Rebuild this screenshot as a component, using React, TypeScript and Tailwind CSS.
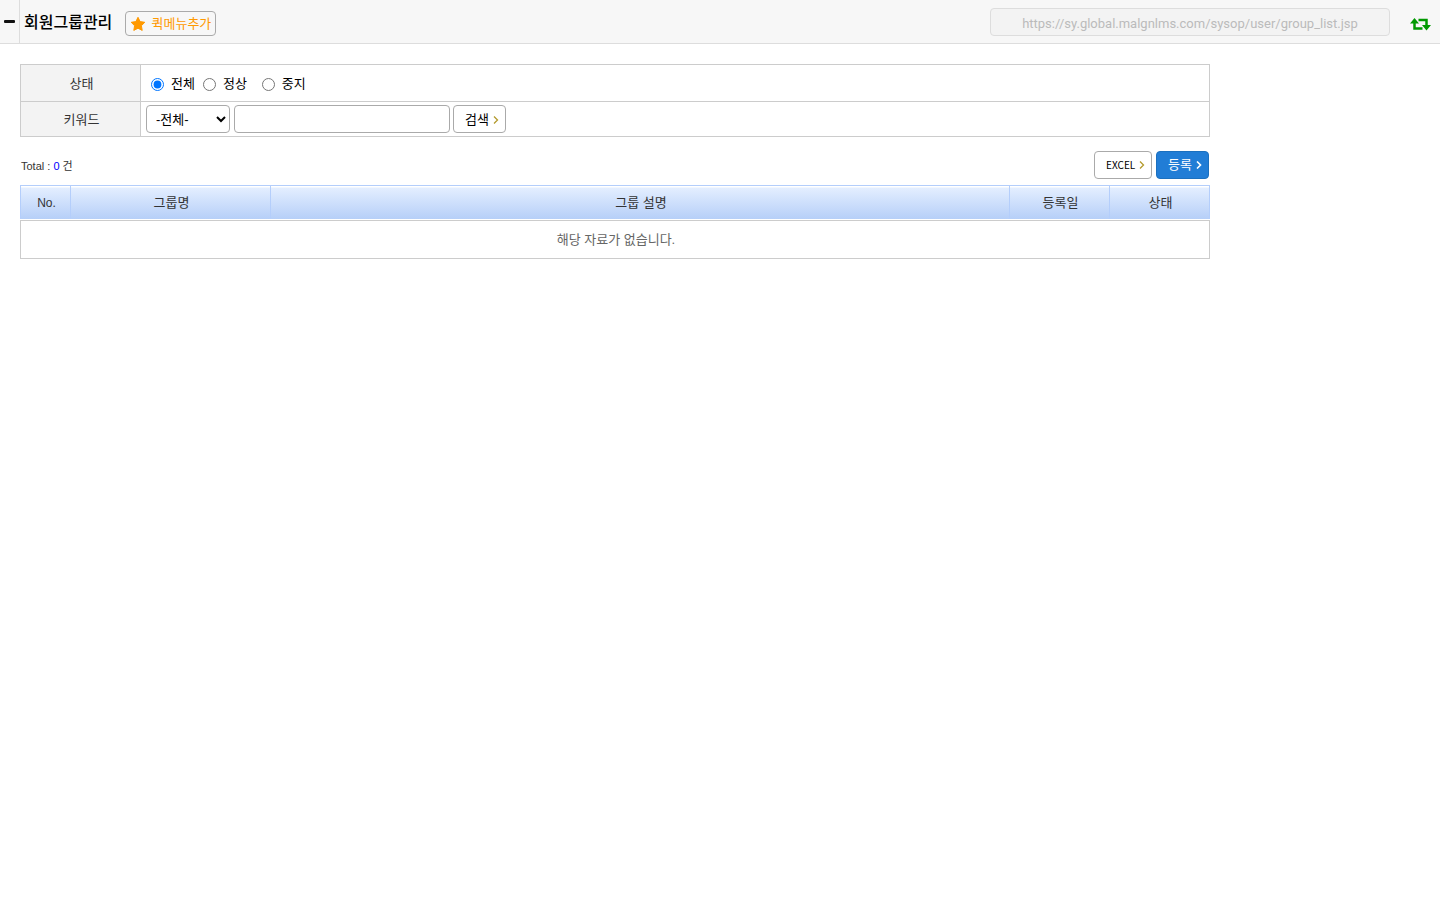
import type { ReactNode } from "react";

const statusOptions = [
  { value: "", label: "전체", spacing: "mr-2" },
  { value: "1", label: "정상", spacing: "mr-[15px]" },
  { value: "0", label: "중지", spacing: "" }
];

const columns = [
  { label: "No.", width: "w-[50px]", text: "text-xs" },
  { label: "그룹명", width: "w-[200px]", text: "" },
  { label: "그룹 설명", width: "", text: "" },
  { label: "등록일", width: "w-[100px]", text: "" },
  { label: "상태", width: "w-[101px]", text: "" }
];

function Chevron({ className }: { className: string }) {
  return (
    <svg viewBox="0 0 6 8" className={`h-2 w-1.5 shrink-0 fill-none ${className}`} aria-hidden="true">
      <path d="M1 0.5 4.5 4 1 7.5" />
    </svg>
  );
}

function SearchRow({ label, children }: { label: ReactNode; children: ReactNode }) {
  return (
    <tr>
      <th scope="row" className="w-[120px] border border-[#cccccc] bg-[#f3f3f3] pt-0.5 pl-0.5 font-normal text-[#333333]">
        {label}
      </th>
      <td className="border border-[#cccccc] px-[5px]">{children}</td>
    </tr>
  );
}

function TopBar() {
  return (
    <header className="flex h-11 items-stretch border-b border-[#dddddd] bg-[#f7f7f7]">
      <button type="button" aria-label="메뉴 접기" className="flex w-5 items-center border-r border-[#dddddd] pl-1">
        <svg viewBox="0 0 12 4" className="h-1 w-3" aria-hidden="true">
          <rect x="0" y="0" width="11" height="3" rx="1" fill="#111111" />
        </svg>
      </button>
      <h1 className="flex items-center pt-0.5 pl-1 text-base font-medium">회원그룹관리</h1>
      <button
        type="button"
        className="mt-[11px] ml-[13px] flex h-[25px] w-[91px] items-center justify-between rounded border border-[#aaaaaa] px-1 text-[#ff9900]"
      >
        <svg viewBox="0 0 16 16" className="size-4" aria-hidden="true">
          <path
            d="M8 1.3 10.1 5.6 14.8 6.3 11.4 9.7 12.2 14.4 8 12.2 3.8 14.4 4.6 9.7 1.2 6.3 5.9 5.6Z"
            fill="#ff9900"
            stroke="#ff9900"
            strokeLinejoin="round"
          />
        </svg>
        퀵메뉴추가
      </button>
      <input
        readOnly
        aria-label="페이지 주소"
        value="https://sy.global.malgnlms.com/sysop/user/group_list.jsp"
        className="mt-2 ml-auto h-7 w-[400px] rounded border border-[#dddddd] bg-[#f3f3f3] pt-0.5 text-center font-[Roboto,'Noto_Sans_CJK_KR',sans-serif] text-[13px] text-[#bbbbbb]"
      />
      <button type="button" aria-label="새로고침" className="mt-1 mr-[9px] ml-5 flex items-center">
        <svg viewBox="0 0 21 14" className="h-3.5 w-[21px]" aria-hidden="true">
          <path d="M4.5 4V11.5H12.5M8.5 3H16.5V10" fill="none" stroke="#009900" strokeWidth="2.5" />
          <path d="M0 6.5 4.5 1 9 6.5ZM12 8 16.5 13.5 21 8Z" fill="#009900" />
        </svg>
      </button>
    </header>
  );
}

function SearchForm() {
  return (
    <form>
      <table className="w-full border-collapse">
        <tbody>
          <SearchRow label="상태">
            <div className="flex h-9 items-center pt-0.5 pl-[5px]">
              {statusOptions.map((option, index) => (
                <label key={option.label} className={`flex items-center gap-[7px] ${option.spacing}`}>
                  <input type="radio" name="status" value={option.value} defaultChecked={index === 0} className="size-[13px]" />
                  {option.label}
                </label>
              ))}
            </div>
          </SearchRow>
          <SearchRow label={<label htmlFor="keyword">키워드</label>}>
            <div className="flex h-[34px] items-center">
              <select aria-label="검색 항목" className="h-7 w-[84px] rounded border border-[#aaaaaa] bg-white pl-[5px]">
                <option>-전체-</option>
              </select>
              <input id="keyword" type="text" className="ml-1 h-7 w-[216px] rounded border border-[#aaaaaa] bg-white px-2" />
              <button type="submit" className="ml-[3px] flex h-7 items-center gap-1 rounded border border-[#aaaaaa] bg-white pt-px pr-1.5 pl-[11px]">
                검색
                <Chevron className="stroke-[#b39a2e] stroke-[1.3]" />
              </button>
            </div>
          </SearchRow>
        </tbody>
      </table>
    </form>
  );
}

function GroupTable() {
  return (
    <table className="mt-1.5 w-full table-fixed border-separate border-spacing-0">
      <thead>
        <tr>
          {columns.map((column) => (
            <th
              key={column.label}
              scope="col"
              className={`h-[34px] border-t border-l border-[#b4cefb] bg-[linear-gradient(#ffffff_1px,#e3eeff_2px,#b6cff8)] pt-px pl-0.5 font-normal text-[#333333] last:border-r ${column.width} ${column.text}`}
            >
              {column.label}
            </th>
          ))}
        </tr>
        <tr aria-hidden="true">
          <td colSpan={columns.length} className="h-px p-0" />
        </tr>
      </thead>
      <tbody>
        <tr>
          <td colSpan={columns.length} className="h-[39px] border border-[#cccccc] pl-0.5 text-center text-[#666666]">
            해당 자료가 없습니다.
          </td>
        </tr>
      </tbody>
    </table>
  );
}

export default function App() {
  return (
    <div className="min-h-screen bg-white font-['Liberation_Sans','Noto_Sans_CJK_KR',sans-serif] text-[13px] leading-5 text-black">
      <TopBar />
      <main className="max-w-[1230px] px-5 pt-5">
        <SearchForm />
        <div className="mt-3.5 flex h-7 items-center">
          <p className="pt-0.5 pl-px text-[11px] text-[#333333]">
            Total : <span className="text-[#0000ff]">0</span> 건
          </p>
          <button
            type="button"
            className="ml-auto flex h-7 w-[58px] items-center justify-between rounded border border-[#aaaaaa] bg-white pr-1.5 pl-[11px] font-['Noto_Sans_CJK_KR',sans-serif] text-[10px]"
          >
            EXCEL
            <Chevron className="stroke-[#b39a2e] stroke-[1.3]" />
          </button>
          <button type="button" className="mr-px ml-1 flex h-7 items-center gap-1 rounded border border-[#1b70bf] bg-[#217dd6] pr-1.5 pl-[11px] text-white">
            등록
            <Chevron className="stroke-white stroke-[1.6]" />
          </button>
        </div>
        <GroupTable />
      </main>
    </div>
  );
}
